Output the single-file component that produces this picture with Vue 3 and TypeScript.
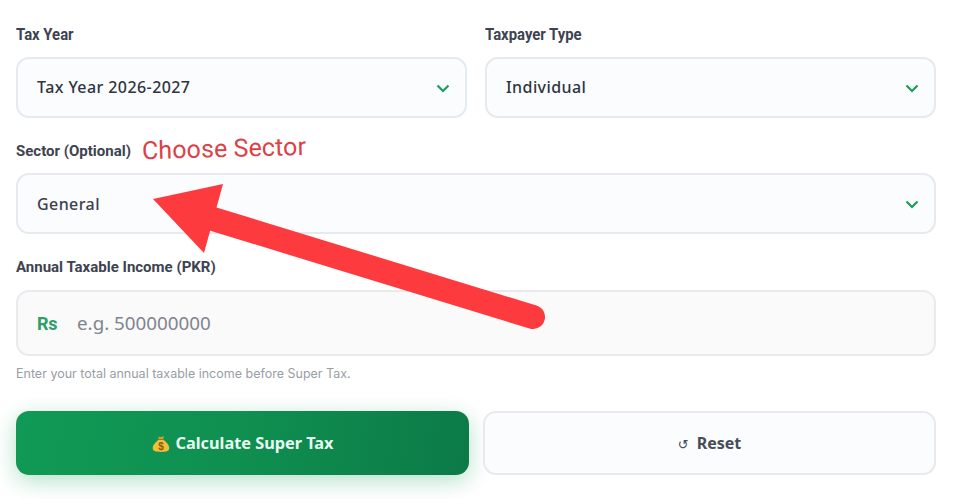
<script setup lang="ts">
const chevron = "M1 1.5 L6.5 7 L12 1.5";
</script>

<template>
  <div class="page">
    <div class="row two">
      <div class="field">
        <label class="label label-narrow">Tax Year</label>
        <div class="select">
          <span class="value">Tax Year 2026-2027</span>
          <svg class="chev" width="14" height="9" viewBox="0 0 13 9"><path :d="chevron" /></svg>
        </div>
      </div>
      <div class="field">
        <label class="label label-narrow">Taxpayer Type</label>
        <div class="select">
          <span class="value">Individual</span>
          <svg class="chev" width="14" height="9" viewBox="0 0 13 9"><path :d="chevron" /></svg>
        </div>
      </div>
    </div>

    <div class="sector-head">
      <label class="label small">Sector (Optional)</label>
      <span class="note">Choose Sector</span>
    </div>
    <div class="select">
      <span class="muted">General</span>
      <svg class="chev" width="14" height="9" viewBox="0 0 13 9"><path :d="chevron" /></svg>
    </div>

    <label class="label income-label">Annual Taxable Income (PKR)</label>
    <div class="income">
      <span class="rs">Rs</span>
      <span class="placeholder">e.g. 500000000</span>
    </div>
    <p class="help">Enter your total annual taxable income before Super Tax.</p>

    <div class="actions">
      <button class="btn primary" type="button">
        <svg class="bag" width="18" height="18" viewBox="0 0 18 18">
          <path d="M6.2 1.6 C7.6 2.6 9.6 2.2 11.8 0.9 L11 5 L7 5 Z" fill="#e0a52a" />
          <path d="M7 4.6 L11 4.6 C14.8 7.5 17.6 10.6 17.2 13.6 C16.9 16.3 14 17 9 17 C4 17 1 16.3 0.8 13.6 C0.5 10.6 3.2 7.5 7 4.6 Z" fill="#f2bd38" />
          <path d="M6.8 4.4 L11.2 4.4" stroke="#a8741a" stroke-width="1.2" />
          <text x="9" y="14.5" text-anchor="middle" class="bag-sign">$</text>
        </svg>
        <span>Calculate Super Tax</span>
      </button>
      <button class="btn ghost" type="button">
        <span class="undo">↺</span>
        <span>Reset</span>
      </button>
    </div>

    <svg class="arrow" width="955" height="499" viewBox="0 0 955 499">
      <path d="M213 219 L533 317" stroke="#fd3a3e" stroke-width="24" stroke-linecap="round" fill="none" />
      <path d="M153 199 L223 184 L204 253 Z" fill="#fd3a3e" />
    </svg>
  </div>
</template>

<style scoped>
.page {
  position: relative;
  width: 955px;
  height: 499px;
  box-sizing: border-box;
  padding: 25px 19px 0 16px;
  font-family: "Noto Sans", sans-serif;
  background: #fff;
  overflow: hidden;
}
.row.two {
  display: grid;
  grid-template-columns: 451px 451px;
  column-gap: 18px;
}
.field {
  display: flex;
  flex-direction: column;
}
.label {
  display: block;
  font-family: Roboto, sans-serif;
  font-weight: 700;
  font-size: 15px;
  line-height: 18px;
  color: #3d4350;
}
.label-narrow {
  font-size: 16px;
  transform-origin: left center;
  transform: scaleX(0.93);
  margin-bottom: 14px;
  position: relative;
  top: 1px;
}
.small {
  font-size: 15px;
  margin-top: 10px;
}
.select {
  height: 61px;
  box-sizing: border-box;
  display: flex;
  align-items: center;
  justify-content: space-between;
  padding: 0 15px 0 19px;
  background: #fafcfe;
  border: 2px solid #e6e9ee;
  border-radius: 13px;
  font-size: 16px;
  font-weight: 500;
  letter-spacing: 0.42px;
  color: #2f3540;
}
.value {
  margin-bottom: 2px;
}
.muted {
  color: #3b414c;
}
.chev {
  fill: none;
  stroke: #1f9a5d;
  stroke-width: 2.2;
  margin-top: 2px;
}
.sector-head {
  display: flex;
  align-items: center;
  gap: 11px;
  height: 55px;
}
.note {
  font-family: Roboto, sans-serif;
  font-size: 25px;
  line-height: 30px;
  letter-spacing: 0.1px;
  color: #dd3f46;
  transform: rotate(-1.5deg);
  margin-top: 6px;
}
.income-label {
  margin-top: 24px;
  margin-bottom: 14px;
}
.income {
  height: 66px;
  box-sizing: border-box;
  display: flex;
  align-items: center;
  padding: 0 19px;
  background: #fafafb;
  border: 2px solid #e8eaee;
  border-radius: 13px;
}
.rs {
  font-family: Roboto, sans-serif;
  font-weight: 700;
  font-size: 18px;
  color: #2f9e68;
  width: 40px;
  letter-spacing: -0.4px;
}
.placeholder {
  font-size: 18.8px;
  color: #7f848c;
}
.help {
  margin: 10px 0 0;
  font-family: Inter, sans-serif;
  font-size: 12.5px;
  line-height: 16px;
  color: #989da6;
}
.actions {
  display: grid;
  grid-template-columns: 453px 453px;
  column-gap: 14px;
  margin-top: 29px;
}
.btn {
  height: 64px;
  box-sizing: border-box;
  display: flex;
  align-items: center;
  justify-content: center;
  border-radius: 13px;
  font-family: "Noto Sans", sans-serif;
  font-weight: 700;
  font-size: 16px;
  cursor: pointer;
}
.primary {
  gap: 6px;
  border: none;
  font-size: 16.3px;
  color: #eafbf2;
  background: linear-gradient(100deg, #109a55 0%, #0f8f50 50%, #0c7a47 100%);
  box-shadow: 0 6px 22px rgba(22, 163, 90, 0.32);
}
.bag {
  flex: none;
  margin-top: 1px;
}
.bag-sign {
  font-family: "Liberation Sans", sans-serif;
  font-weight: 700;
  font-size: 10px;
  fill: #8a5a10;
}
.ghost {
  gap: 8px;
  background: #fbfcfe;
  border: 2px solid #e7e9ee;
  color: #474c57;
}
.undo {
  font-family: "DejaVu Sans", sans-serif;
  font-weight: 400;
  font-size: 13px;
  margin-top: 3px;
}
.arrow {
  position: absolute;
  left: 0;
  top: 0;
  pointer-events: none;
}
</style>

<style>
html, body {
  margin: 0;
  background: #fff;
}
</style>
